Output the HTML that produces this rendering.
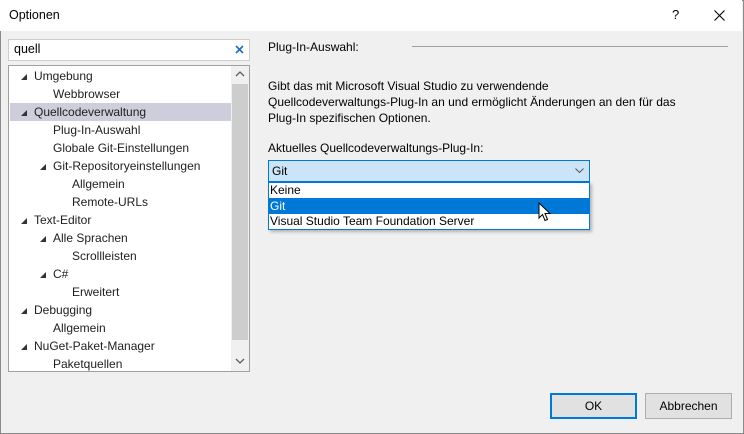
<!DOCTYPE html><html><head><style>
*{margin:0;padding:0;box-sizing:border-box}
body{width:744px;height:434px;overflow:hidden;font-family:"Liberation Sans",sans-serif;font-size:12px;color:#000;background:#f0f0f0;position:relative}
.a{position:absolute;white-space:nowrap}
.win{position:absolute;left:0;top:0;width:744px;height:434px;border:1px solid #8a8a8a;background:#f0f0f0}
.title{position:absolute;left:0;top:0;width:742px;height:31px;background:#fff}
.row{position:absolute;left:0;height:18px;line-height:18px;width:221px;color:#1e1e1e}
.tri{position:absolute;width:0;height:0;border-left:6px solid transparent;border-bottom:6px solid #333;top:7px}
</style></head><body>
<div class="win"></div>
<div class="title"></div>
<div class="a" style="left:9px;top:8px;font-size:12.5px">Optionen</div>
<div class="a" style="left:672px;top:7px;font-size:13px">?</div>
<svg class="a" style="left:714px;top:10px" width="11" height="11"><path d="M0.5 0.5L10.5 10.5M10.5 0.5L0.5 10.5" stroke="#000" stroke-width="1.1"/></svg>

<div class="a" style="left:8px;top:39px;width:242px;height:22px;background:#fff;border:1px solid #cdcdcd"></div>
<div class="a" style="left:14px;top:42px;font-size:12.5px">quell</div>
<svg class="a" style="left:235px;top:45px" width="9" height="9"><path d="M1 1L8 8M8 1L1 8" stroke="#1a6fc4" stroke-width="1.6"/></svg>

<div class="a" style="left:8px;top:65px;width:242px;height:307px;background:#fff;border:1px solid #a0a0a0;overflow:hidden">
 <div class="a" style="left:222px;top:0;width:18px;height:305px;background:#f0f0f0"></div>
 <div class="a" style="left:223px;top:18px;width:16px;height:256px;background:#cdcdcd"></div>
 <svg class="a" style="left:226px;top:5px" width="10" height="6"><path d="M1 5L5 1L9 5" stroke="#606060" stroke-width="1.3" fill="none"/></svg>
 <svg class="a" style="left:226px;top:292px" width="10" height="6"><path d="M1 1L5 5L9 1" stroke="#606060" stroke-width="1.3" fill="none"/></svg>
 <div class="row" style="top:1px;left:0"><span class="tri" style="left:12px"></span><span class="a" style="left:25px">Umgebung</span></div>
 <div class="row" style="top:19px"><span class="a" style="left:44px">Webbrowser</span></div>
 <div class="row" style="top:37px;left:1px;background:#cccedb"><span class="tri" style="left:11px"></span><span class="a" style="left:24px">Quellcodeverwaltung</span></div>
 <div class="row" style="top:55px"><span class="a" style="left:44px">Plug-In-Auswahl</span></div>
 <div class="row" style="top:73px"><span class="a" style="left:44px">Globale Git-Einstellungen</span></div>
 <div class="row" style="top:91px"><span class="tri" style="left:31px"></span><span class="a" style="left:44px">Git-Repositoryeinstellungen</span></div>
 <div class="row" style="top:109px"><span class="a" style="left:63px">Allgemein</span></div>
 <div class="row" style="top:127px"><span class="a" style="left:63px">Remote-URLs</span></div>
 <div class="row" style="top:145px"><span class="tri" style="left:12px"></span><span class="a" style="left:25px">Text-Editor</span></div>
 <div class="row" style="top:163px"><span class="tri" style="left:31px"></span><span class="a" style="left:44px">Alle Sprachen</span></div>
 <div class="row" style="top:181px"><span class="a" style="left:63px">Scrollleisten</span></div>
 <div class="row" style="top:199px"><span class="tri" style="left:31px"></span><span class="a" style="left:44px">C#</span></div>
 <div class="row" style="top:217px"><span class="a" style="left:63px">Erweitert</span></div>
 <div class="row" style="top:235px"><span class="tri" style="left:12px"></span><span class="a" style="left:25px">Debugging</span></div>
 <div class="row" style="top:253px"><span class="a" style="left:44px">Allgemein</span></div>
 <div class="row" style="top:271px"><span class="tri" style="left:12px"></span><span class="a" style="left:25px">NuGet-Paket-Manager</span></div>
 <div class="row" style="top:289px"><span class="a" style="left:44px">Paketquellen</span></div>
</div>

<div class="a" style="left:268px;top:40px">Plug-In-Auswahl:</div>
<div class="a" style="left:412px;top:46px;width:316px;height:1px;background:#a0a0a0"></div>
<div class="a" style="left:268px;top:78px;line-height:16px">Gibt das mit Microsoft Visual Studio zu verwendende<br>Quellcodeverwaltungs-Plug-In an und ermöglicht Änderungen an den für das<br>Plug-In spezifischen Optionen.</div>
<div class="a" style="left:268px;top:141px">Aktuelles Quellcodeverwaltungs-Plug-In:</div>
<div class="a" style="left:268px;top:160px;width:322px;height:22px;background:#cce4f7;border:1px solid #0078d7"></div>
<div class="a" style="left:272px;top:164px">Git</div>
<svg class="a" style="left:575px;top:168px" width="9" height="5"><path d="M0.5 0.5L4.5 4.5L8.5 0.5" stroke="#555" fill="none"/></svg>
<div class="a" style="left:268px;top:182px;width:322px;height:48px;background:#fff;border:1px solid #0078d7;box-shadow:2px 2px 3px rgba(0,0,0,.25)"></div>
<div class="a" style="left:269px;top:198px;width:320px;height:16px;background:#0078d7"></div>
<div class="a" style="left:270px;top:183px;line-height:15.5px">Keine</div>
<div class="a" style="left:270px;top:199px;line-height:15px;color:#fff">Git</div>
<div class="a" style="left:270px;top:214px;line-height:15px">Visual Studio Team Foundation Server</div>
<svg class="a" style="left:538px;top:202px" width="14" height="20"><path d="M1 1L1 16L4.5 12.5L7 18.5L9.5 17.5L7 11.5L12 11.5Z" fill="#fff" stroke="#000" stroke-width="1"/></svg>

<div class="a" style="left:550px;top:393px;width:87px;height:26px;background:#e1e1e1;border:2px solid #0078d7;text-align:center;line-height:22px">OK</div>
<div class="a" style="left:645px;top:393px;width:87px;height:26px;background:#e1e1e1;border:1px solid #adadad;text-align:center;line-height:24px">Abbrechen</div>
</body></html>
